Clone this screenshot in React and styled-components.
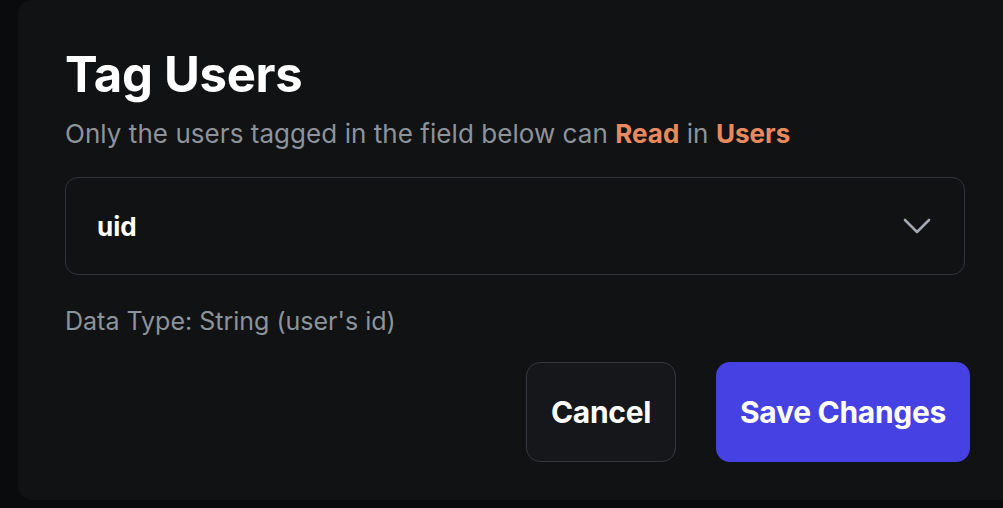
import React from "react";
import styled, { createGlobalStyle } from "styled-components";

const GlobalStyle = createGlobalStyle`
  html, body {
    margin: 0;
    padding: 0;
    background: #0a0b0c;
    font-family: "Inter", "Noto Sans", sans-serif;
    overflow: hidden;
  }
`;

const Page = styled.div`
  width: 1003px;
  height: 508px;
  padding-left: 18px;
  box-sizing: border-box;
  overflow: hidden;
`;

const Panel = styled.div`
  width: 1040px;
  height: 500px;
  background: #111214;
  border-radius: 14px;
  box-sizing: border-box;
  padding: 43px 0 0 47px;
`;

const Content = styled.div`
  width: 900px;
  display: flex;
  flex-direction: column;
`;

const Title = styled.h1`
  margin: 0;
  color: #ffffff;
  font-size: 49px;
  font-weight: 700;
  line-height: 64px;
  letter-spacing: -0.3px;
`;

const Subtitle = styled.p`
  margin: 9px 0 0;
  color: #8d939b;
  font-size: 26px;
  line-height: 36px;
  letter-spacing: 0.05px;
`;

const Accent = styled.span`
  color: #e98a5e;
  font-weight: 700;
`;

const Select = styled.div`
  margin-top: 25px;
  height: 98px;
  border: 1.5px solid #30343a;
  border-radius: 13px;
  box-sizing: border-box;
  display: flex;
  align-items: center;
  justify-content: space-between;
  padding: 0 33px 0 31px;
`;

const SelectValue = styled.span`
  color: #ffffff;
  font-size: 26px;
  font-weight: 700;
`;

const Hint = styled.p`
  margin: 28px 0 0;
  color: #8d939b;
  font-size: 25px;
  line-height: 36px;
`;

const Actions = styled.div`
  display: flex;
  justify-content: flex-end;
  gap: 40px;
  margin-top: 23px;
  margin-right: -5px;
`;

const Button = styled.button`
  height: 100px;
  padding: 0 24px;
  border-radius: 14px;
  font-family: inherit;
  font-size: 30px;
  font-weight: 700;
  letter-spacing: -0.3px;
  color: #ffffff;
  cursor: pointer;
  background: ${(p) => (p.$primary ? "#4641e2" : "#15171a")};
  border: ${(p) => (p.$primary ? "none" : "1.5px solid #33373d")};
  box-sizing: border-box;
`;

const Chevron = () => (
  <svg width="28" height="18" viewBox="0 0 28 18" fill="none">
    <path
      d="M2 3l12 12L26 3"
      stroke="#a3a8b0"
      strokeWidth="2.6"
      strokeLinecap="round"
      strokeLinejoin="round"
    />
  </svg>
);

export default function App() {
  return (
    <>
      <GlobalStyle />
      <Page>
        <Panel>
          <Content>
            <Title>Tag Users</Title>
            <Subtitle>
              Only the users tagged in the field below can <Accent>Read</Accent> in{" "}
              <Accent>Users</Accent>
            </Subtitle>
            <Select>
              <SelectValue>uid</SelectValue>
              <Chevron />
            </Select>
            <Hint>Data Type: String (user's id)</Hint>
            <Actions>
              <Button>Cancel</Button>
              <Button $primary>Save Changes</Button>
            </Actions>
          </Content>
        </Panel>
      </Page>
    </>
  );
}
